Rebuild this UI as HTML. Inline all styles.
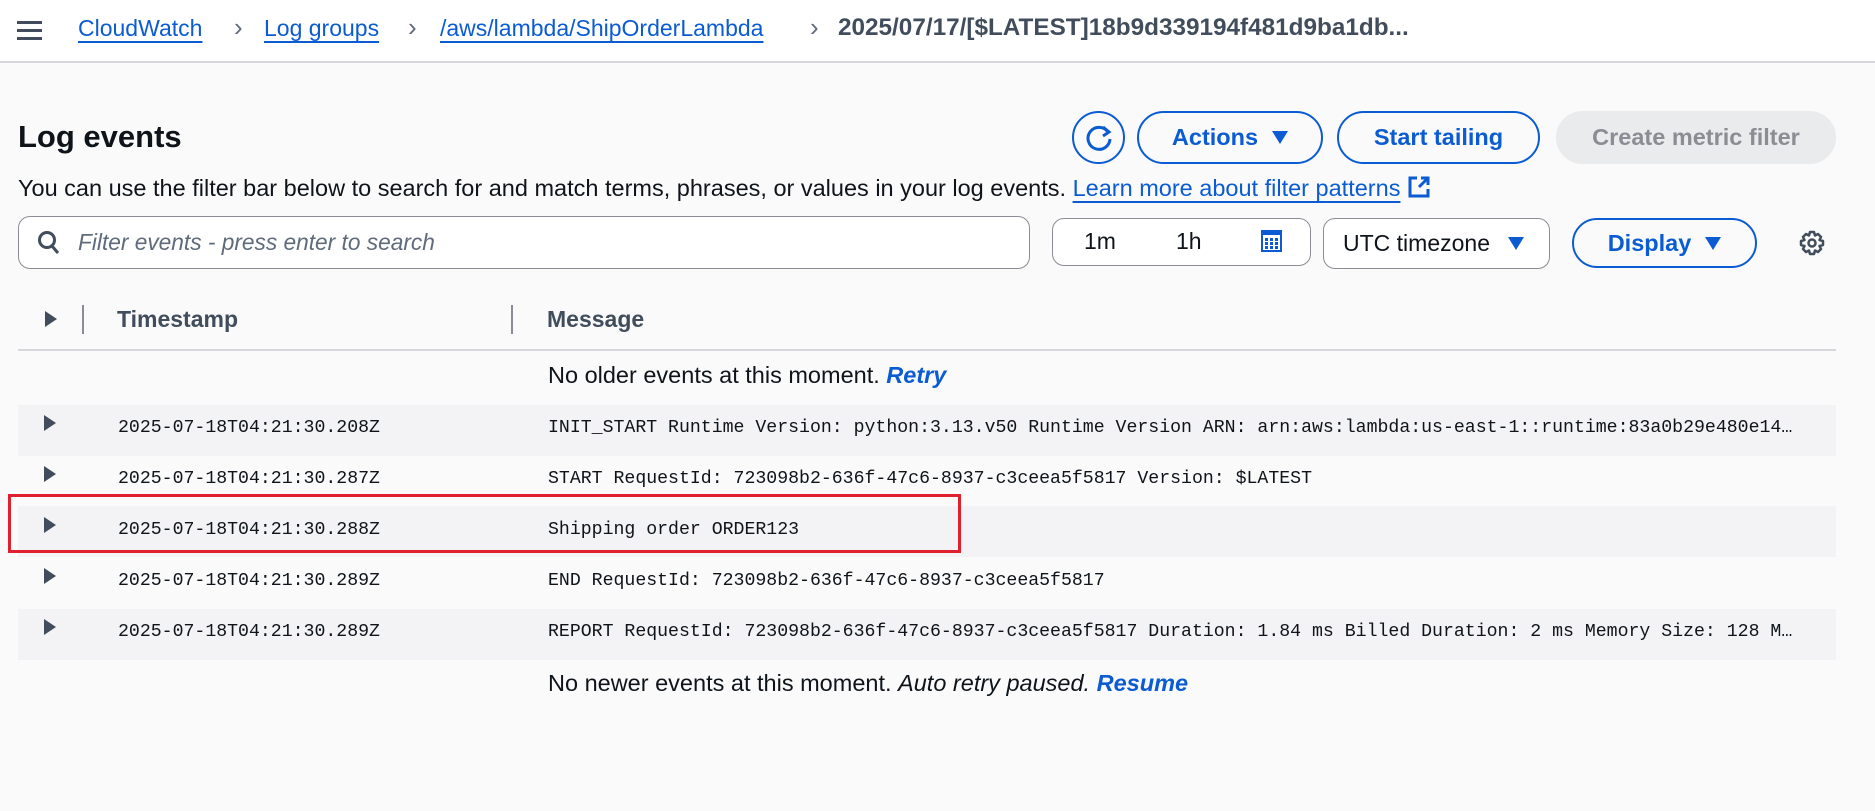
<!DOCTYPE html>
<html><head><meta charset="utf-8"><style>
*{box-sizing:border-box;margin:0;padding:0}
body{width:1875px;height:811px;background:#fafafa;font-family:"Liberation Sans",sans-serif;color:#0f141a;position:relative;overflow:hidden}
.a{position:absolute;white-space:nowrap}
.hdr{left:0;top:0;width:1875px;height:63px;background:#fff;border-bottom:2px solid #d5d7da}
.bc{font-size:23px;top:15px;color:#0b5bd3;text-decoration:underline;text-decoration-thickness:2px;text-underline-offset:5px}
.sep{top:12px;font-size:26px;color:#5f6b7a}
.btn{border:2.5px solid #0b5bd3;border-radius:28px;color:#0b5bd3;font-weight:bold;font-size:23.5px;display:flex;align-items:center;justify-content:center;gap:14px}
.tri{width:0;height:0;border-left:8px solid transparent;border-right:8px solid transparent;border-top:13px solid #0b5bd3;display:inline-block}
.box{border:1.5px solid #8c8c94;border-radius:12px;background:#fff}
.play{width:0;height:0;border-top:8px solid transparent;border-bottom:8px solid transparent;border-left:12px solid #414d5c}
.row{left:18px;width:1818px;height:51px}
.g{background:#f3f3f5}
.mono{font-family:"Liberation Mono",monospace;font-size:18.2px;color:#0f141a}
.txt{font-size:23px}
</style></head><body>
<div class="a hdr"></div>
<svg class="a" style="left:17px;top:20px" width="26" height="22"><rect y="1" width="25" height="3" fill="#414d5c"/><rect y="9" width="25" height="3" fill="#414d5c"/><rect y="17" width="25" height="3" fill="#414d5c"/></svg>
<div class="a bc" style="left:78px">CloudWatch</div>
<div class="a sep" style="left:234px">&#x203A;</div>
<div class="a bc" style="left:264px">Log groups</div>
<div class="a sep" style="left:408px">&#x203A;</div>
<div class="a bc" style="left:440px">/aws/lambda/ShipOrderLambda</div>
<div class="a sep" style="left:810px">&#x203A;</div>
<div class="a" style="left:838px;top:14px;font-size:24.3px;font-weight:bold;color:#414d5c">2025/07/17/[$LATEST]18b9d339194f481d9ba1db...</div>

<div class="a" style="left:18px;top:119px;font-size:31px;font-weight:bold">Log events</div>
<div class="a btn" style="left:1072px;top:111px;width:53px;height:53px;padding:0"><svg width="30" height="30" viewBox="0 0 30 30"><path d="M24 9A11 11 0 1 0 26 16" fill="none" stroke="#0b5bd3" stroke-width="3"/><path d="M19 4L25 9L19 13" fill="none" stroke="#0b5bd3" stroke-width="3"/></svg></div>
<div class="a btn" style="left:1137px;top:111px;width:186px;height:53px">Actions <span class="tri"></span></div>
<div class="a btn" style="left:1337px;top:111px;width:203px;height:53px">Start tailing</div>
<div class="a btn" style="left:1556px;top:111px;width:280px;height:53px;border-color:#e9ebed;background:#e9ebed;color:#8c8c94">Create metric filter</div>

<div class="a" style="left:18px;top:175px;font-size:23.5px">You can use the filter bar below to search for and match terms, phrases, or values in your log events. <span style="color:#0b5bd3;text-decoration:underline;text-underline-offset:5px">Learn more about filter patterns</span> <svg style="vertical-align:-3px" width="24" height="24" viewBox="0 0 24 24"><path d="M10 3H3V21H21V14" fill="none" stroke="#0b5bd3" stroke-width="3"/><path d="M12 12L21 3M14 3H21V10" fill="none" stroke="#0b5bd3" stroke-width="3"/></svg></div>

<div class="a box" style="left:18px;top:216px;width:1012px;height:53px"></div>
<svg class="a" style="left:37px;top:230px" width="24" height="26" viewBox="0 0 24 26"><circle cx="10" cy="10" r="7.5" fill="none" stroke="#414d5c" stroke-width="3"/><path d="M15 16L21 23" stroke="#414d5c" stroke-width="3"/></svg>
<div class="a" style="left:78px;top:229px;font-size:22.7px;font-style:italic;color:#5f6b7a">Filter events - press enter to search</div>

<div class="a box" style="left:1052px;top:218px;width:259px;height:48px"></div>
<div class="a txt" style="left:1084px;top:228px">1m</div>
<div class="a txt" style="left:1176px;top:228px">1h</div>
<svg class="a" style="left:1261px;top:230px" width="21" height="22" viewBox="0 0 21 22"><rect x="1" y="1" width="19" height="20" fill="none" stroke="#0b5bd3" stroke-width="2"/><rect x="1" y="1" width="19" height="4" fill="#0b5bd3"/><g fill="#0b5bd3"><rect x="4" y="8" width="3" height="3"/><rect x="9" y="8" width="3" height="3"/><rect x="14" y="8" width="3" height="3"/><rect x="4" y="12" width="3" height="3"/><rect x="9" y="12" width="3" height="3"/><rect x="14" y="12" width="3" height="3"/><rect x="4" y="16" width="3" height="3"/><rect x="9" y="16" width="3" height="3"/><rect x="14" y="16" width="3" height="3"/></g></svg>

<div class="a box" style="left:1323px;top:218px;width:227px;height:51px"></div>
<div class="a txt" style="left:1343px;top:230px">UTC timezone</div>
<span class="a tri" style="left:1508px;top:237px"></span>
<div class="a btn" style="left:1572px;top:218px;width:185px;height:50px">Display <span class="tri"></span></div>
<svg class="a" style="left:1799px;top:230px" width="26" height="26" viewBox="0 0 26 26"><path d="M11 2h4l1 3.5 3-1.5 3 3-1.5 3 3.5 1v4l-3.5 1 1.5 3-3 3-3-1.5-1 3.5h-4l-1-3.5-3 1.5-3-3 1.5-3-3.5-1v-4l3.5-1-1.5-3 3-3 3 1.5z" fill="none" stroke="#414d5c" stroke-width="2.5" stroke-linejoin="round"/><circle cx="13" cy="13" r="3.5" fill="none" stroke="#414d5c" stroke-width="2.5"/></svg>

<div class="a play" style="left:45px;top:311px"></div>
<div class="a" style="left:82px;top:305px;width:2px;height:29px;background:#8c8c94"></div>
<div class="a" style="left:117px;top:306px;font-size:23px;font-weight:bold;color:#414d5c">Timestamp</div>
<div class="a" style="left:511px;top:305px;width:2px;height:29px;background:#8c8c94"></div>
<div class="a" style="left:547px;top:306px;font-size:23px;font-weight:bold;color:#414d5c">Message</div>
<div class="a" style="left:18px;top:349px;width:1818px;height:2px;background:#d5d7da"></div>

<div class="a" style="left:548px;top:362px;font-size:23.5px">No older events at this moment. <i style="color:#0b5bd3;font-weight:bold">Retry</i></div>

<div class="a row g" style="top:405px"></div>
<div class="a row g" style="top:506px"></div>
<div class="a row g" style="top:609px"></div>

<div class="a play" style="left:44px;top:415px"></div>
<div class="a mono" style="left:118px;top:418px">2025-07-18T04:21:30.208Z</div>
<div class="a mono" style="left:548px;top:418px;width:1252px;overflow:hidden;text-overflow:ellipsis">INIT_START Runtime Version: python:3.13.v50 Runtime Version ARN: arn:aws:lambda:us-east-1::runtime:83a0b29e480e141a8b3ad1d0b0c5b4a8e2d0c1f3</div>

<div class="a play" style="left:44px;top:466px"></div>
<div class="a mono" style="left:118px;top:469px">2025-07-18T04:21:30.287Z</div>
<div class="a mono" style="left:548px;top:469px">START RequestId: 723098b2-636f-47c6-8937-c3ceea5f5817 Version: $LATEST</div>

<div class="a play" style="left:44px;top:517px"></div>
<div class="a mono" style="left:118px;top:520px">2025-07-18T04:21:30.288Z</div>
<div class="a mono" style="left:548px;top:520px">Shipping order ORDER123</div>

<div class="a play" style="left:44px;top:568px"></div>
<div class="a mono" style="left:118px;top:571px">2025-07-18T04:21:30.289Z</div>
<div class="a mono" style="left:548px;top:571px">END RequestId: 723098b2-636f-47c6-8937-c3ceea5f5817</div>

<div class="a play" style="left:44px;top:619px"></div>
<div class="a mono" style="left:118px;top:622px">2025-07-18T04:21:30.289Z</div>
<div class="a mono" style="left:548px;top:622px;width:1252px;overflow:hidden;text-overflow:ellipsis">REPORT RequestId: 723098b2-636f-47c6-8937-c3ceea5f5817 Duration: 1.84 ms Billed Duration: 2 ms Memory Size: 128 MB Max Memory Used: 40 MB</div>

<div class="a" style="left:8px;top:494px;width:953px;height:59px;border:3px solid #e0202e"></div>

<div class="a" style="left:548px;top:670px;font-size:23.5px">No newer events at this moment. <i>Auto retry paused.</i> <i style="color:#0b5bd3;font-weight:bold">Resume</i></div>
</body></html>
